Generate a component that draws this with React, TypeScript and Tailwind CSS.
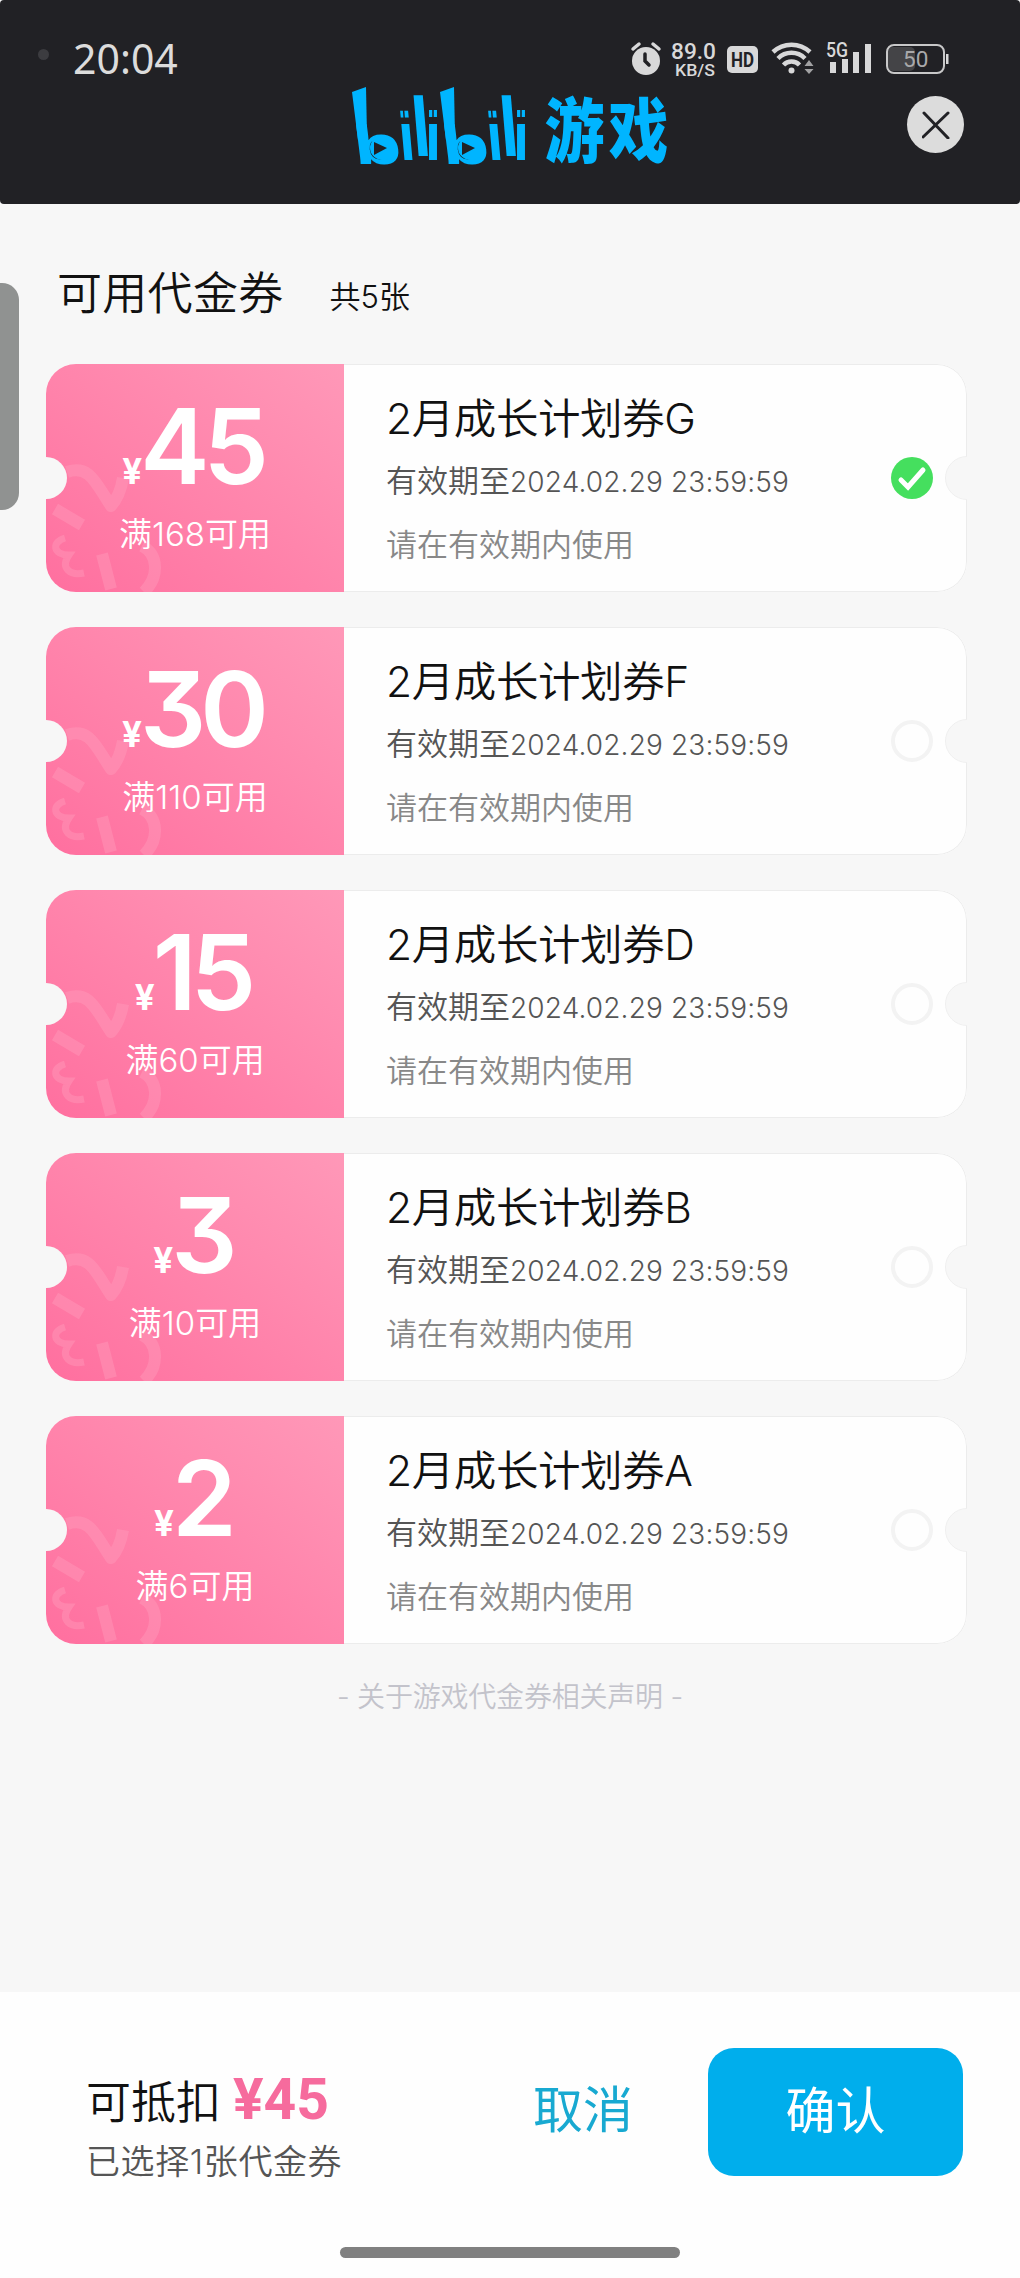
import { useState } from "react"

const coupons = [
  { name: "G", price: 45, min: 168 },
  { name: "F", price: 30, min: 110 },
  { name: "D", price: 15, min: 60 },
  { name: "B", price: 3, min: 10 },
  { name: "A", price: 2, min: 6 }
]

function StatusIcons() {
  return (
    <svg width="330" height="46" viewBox="0 0 330 46" fill="#d8d8d9">
      {/* alarm */}
      <circle cx="17" cy="28" r="14" />
      <path
        d="M4 16l6-5M30 16l-6-5"
        stroke="#d8d8d9"
        strokeWidth="3.500"
        strokeLinecap="round"
      />
      <path
        d="M16 21v7l4 4"
        stroke="#212125"
        strokeWidth="3.500"
        fill="none"
        strokeLinecap="round"
      />
      <g fontFamily="Roboto, sans-serif">
        <text
          x="42"
          y="26"
          fontSize="22.500"
          fontWeight="500"
          textLength="45"
          lengthAdjust="spacingAndGlyphs"
        >
          89.0
        </text>
        <text
          x="46"
          y="43"
          fontSize="17"
          fontWeight="500"
          textLength="40"
          lengthAdjust="spacingAndGlyphs"
        >
          KB/S
        </text>
        <rect x="98" y="13" width="31" height="27" rx="5" />
        <text
          x="102"
          y="34"
          fontSize="21"
          fontWeight="700"
          fill="#212125"
          textLength="23"
          lengthAdjust="spacingAndGlyphs"
        >
          HD
        </text>
        <text
          x="197"
          y="24"
          fontSize="20"
          fontWeight="500"
          textLength="22"
          lengthAdjust="spacingAndGlyphs"
        >
          5G
        </text>
      </g>
      {/* wifi */}
      <g stroke="#d8d8d9" strokeWidth="4.500" fill="none">
        <path d="M144 19a27 27 0 0 1 37 0" />
        <path d="M149 25.500a19 19 0 0 1 27 0" />
        <path d="M154.500 32a11 11 0 0 1 16 0" />
      </g>
      <circle cx="162.500" cy="37.500" r="3" />
      <path d="M180 27l4.500 6h-9zM180 41l4.500-5h-9z" opacity=".7" />
      {/* signal */}
      <rect x="201" y="29" width="6" height="11" />
      <rect x="213" y="26" width="6" height="14" />
      <rect x="224" y="19" width="6" height="21" />
      <rect x="236" y="11" width="6" height="29" />
      {/* battery */}
      <rect x="259" y="14" width="27" height="24" rx="5" fill="#444447" />
      <rect
        x="258"
        y="12"
        width="57"
        height="28"
        rx="7"
        fill="none"
        stroke="#c8c8c9"
        strokeWidth="2"
      />
      <rect x="317" y="21" width="2.500" height="10" />
      <text
        x="274"
        y="34"
        fontSize="22.500"
        fontFamily="Roboto, sans-serif"
        fill="#a9a9ab"
      >
        50
      </text>
    </svg>
  )
}

function Logo() {
  return (
    <svg
      className="mt-px overflow-visible"
      width="320"
      height="84"
      viewBox="0 0 320 84"
      fill="#00b5ff"
    >
      {[0, 88].map((x) => (
        <g
          key={x}
          transform={`translate(${x} 0)`}
          fontFamily="'Liberation Sans', sans-serif"
          fontWeight="700"
        >
          <path d="M2 7L16 2L17 50L8 55z" />
          <text fontSize="55" transform="translate(5.500 78.500) scale(1.420 1) skewX(5)">
            b
          </text>
          <ellipse cx="33" cy="63" rx="13" ry="12" />
          <path d="M24 57v13l13-7z" fill="#212125" />
          <text fontSize="68" transform="translate(50.500 75) scale(.850 1) skewX(6)">
            i
          </text>
          <text fontSize="84" transform="translate(64 71) scale(.800 1) skewX(6)">
            l
          </text>
          <text fontSize="68" transform="translate(75 75) scale(.850 1) skewX(0)">
            i
          </text>
          <path
            d="M53.500 24l1 13M83 24v13"
            stroke="#212125"
            strokeWidth="1.500"
          />
        </g>
      ))}
      <text
        fontFamily="'Noto Sans CJK SC', sans-serif"
        fontWeight="900"
        fontSize="60"
        letterSpacing="4"
        transform="translate(194.500 72) scale(1 1.180)"
      >
        游戏
      </text>
    </svg>
  )
}

function Mascot() {
  return (
    <svg
      className="absolute bottom-0 left-0"
      width="130"
      height="140"
      viewBox="0 0 130 140"
      fill="none"
      stroke="#ff9dbd"
      strokeOpacity=".42"
      strokeWidth="12"
    >
      <path d="M21 20C44 12 50 32 65 54Q74 44 77 26" strokeLinejoin="round" />
      <path d="M96 94C112 102 114 124 98 140" />
      <path d="M9 57L36 73M56 102L65 137" />
      <path d="M19 86C5 90 7 103 23 103C14 116 24 124 38 121" strokeWidth="7" />
    </svg>
  )
}

function Coupon({
  name,
  price,
  min,
  checked,
  onSelect
}: {
  name: string
  price: number
  min: number
  checked: boolean
  onSelect: () => void
}) {
  return (
    <div
      className="relative flex h-[228px] cursor-pointer overflow-hidden rounded-[30px] bg-[#fefefe]"
      onClick={onSelect}
    >
      <div className="relative flex w-[298px] flex-col items-center bg-linear-to-tr from-[#ff6f9f] to-[#ff98b8] pt-[30px] text-white">
        <Mascot />
        <div className="relative flex h-[104px] items-baseline pr-[5px] font-[Inter] font-semibold">
          <span className="mr-[-2px] text-[35px] font-bold">¥</span>
          <span className="text-[104px] leading-[104px] tracking-[-6px] [font-feature-settings:'cv09']">
            {price}
          </span>
        </div>
        <div className="relative mt-[16px] text-[33px] leading-[40px] font-[350]">
          满{min}可用
        </div>
      </div>
      <div className="flex-1 rounded-r-[30px] border-y border-r border-[#ececec] pt-[28px] pl-[42px]">
        <div className="text-[42.500px] leading-[52px] font-[350] tracking-[-0.4px] text-[#111]">
          2月成长计划券{name}
        </div>
        <div className="mt-[14px] text-[31px] leading-[44px] font-[350] text-[#555]">
          有效期至
          <span className="font-[Inter] text-[28px] tracking-[0.15px]">
            2024.02.29 23:59:59
          </span>
        </div>
        <div className="mt-[19px] text-[31px] leading-[44px] font-[350] text-[#888]">
          请在有效期内使用
        </div>
      </div>
      <svg
        className="absolute top-[93px] right-[34px]"
        width="42"
        height="42"
        viewBox="0 0 42 42"
        fill="none"
      >
        {checked ? (
          <>
            <circle cx="21" cy="21" r="21" fill="#45df5e" />
            <path
              d="M10 23l7 7 15-17"
              stroke="#fff"
              strokeWidth="5"
              strokeLinecap="round"
            />
          </>
        ) : (
          <circle cx="21" cy="21" r="19" stroke="#f3f3f3" strokeWidth="4" />
        )}
      </svg>
      <div className="absolute top-[93px] left-[-21px] h-[42px] w-[42px] rounded-full bg-[#f7f7f7]" />
      <div className="absolute top-[92px] right-[-22px] h-[44px] w-[44px] rounded-full border border-[#efefef] bg-[#f7f7f7]" />
    </div>
  )
}

export default function App() {
  const [selected, setSelected] = useState(0)

  return (
    <div className="relative flex h-[2278px] w-[1020px] flex-col bg-[#f7f7f7] font-[Inter,'Noto_Sans_CJK_SC',sans-serif]">
      <header className="h-[204px] rounded-[4px] bg-[#212125]">
        <div className="flex h-[84px] items-start justify-between pt-[33px] pr-[61px] pl-[38px]">
          <div className="flex items-center">
            <div className="mb-[8px] h-[11px] w-[11px] rounded-full bg-[#3c3c40]" />
            <div className="ml-[24px] font-['Noto_Sans'] text-[41px] leading-[51px] text-[#dcdcdc]">
              20:04
            </div>
          </div>
          <StatusIcons />
        </div>
        <div className="flex justify-between pr-[56px] pl-[350px]">
          <Logo />
          <button className="mt-[12px] flex h-[57px] w-[57px] items-center justify-center rounded-full bg-[#dcdcdc]">
            <svg width="28" height="28" viewBox="0 0 28 28">
              <path
                d="M2 2l24 25M26 2L1 26"
                stroke="#212125"
                strokeWidth="3"
                strokeLinecap="round"
              />
            </svg>
          </button>
        </div>
      </header>

      <main className="flex-1 pr-[53px] pl-[46px]">
        <div className="flex h-[116px] items-baseline pt-[62px] pl-[11px] text-[#111]">
          <h1 className="text-[45px] leading-[56px] font-[350] tracking-[0.3px]">
            可用代金券
          </h1>
          <span className="relative top-[-2px] ml-[46px] text-[31px] leading-[40px] font-[350]">
            共5张
          </span>
        </div>
        <div className="mt-[44px] flex flex-col gap-[35px]">
          {coupons.map((item, index) => (
            <Coupon
              key={item.name}
              {...item}
              checked={selected === index}
              onSelect={() => setSelected(index)}
            />
          ))}
        </div>
        <div className="mt-[33px] pl-[7px] text-center text-[28px] leading-[40px] font-[350] tracking-[-0.2px] text-[#c3c3cb]">
          - 关于游戏代金券相关声明 -
        </div>
      </main>

      <footer className="flex h-[286px] flex-col bg-[#fefefe] pt-[56px]">
        <div className="flex h-[128px] items-center pr-[57px] pl-[86px]">
          <div className="w-[447px] pt-[30px]">
            <div className="flex items-baseline text-[45px] leading-[60px] font-[350] text-[#111]">
              可抵扣
              <span className="ml-[12px] font-[Roboto] text-[57px] font-bold text-[#f66b9d]">
                ¥{coupons[selected].price}
              </span>
            </div>
            <div className="mt-[6px] text-[34px] leading-[46px] font-[350] tracking-[0.6px] text-[#555]">
              已选择1张代金券
            </div>
          </div>
          <button className="pb-[3px] text-[50px] text-[#18a9d1]">取消</button>
          <button className="ml-auto h-[128px] w-[255px] rounded-[26px] bg-[#00aeec] pb-[2px] text-[50px] text-white">
            确认
          </button>
        </div>
        <div className="mx-auto mt-[71px] h-[11px] w-[340px] rounded-full bg-[#808080]" />
      </footer>

      <div className="absolute top-[283px] left-0 h-[227px] w-[19px] rounded-r-[17px] bg-[#909291]" />
    </div>
  )
}
